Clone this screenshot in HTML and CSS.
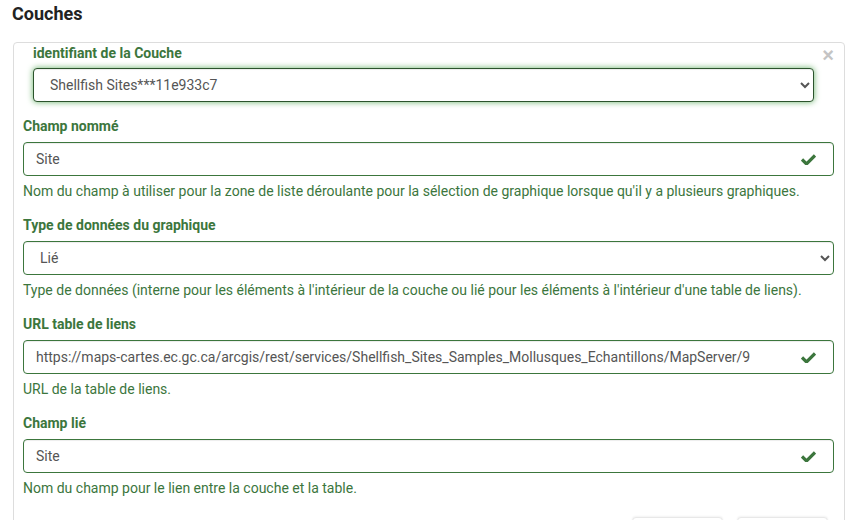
FILE: index.html
```html
<!DOCTYPE html>
<html lang="fr">
<head>
<meta charset="utf-8">
<link rel="stylesheet" href="styles.css">
</head>
<body>
<h2 class="title">Couches</h2>
<div class="panel">
  <button class="close" type="button">×</button>
  <div class="group first">
    <label class="lbl">identifiant de la Couche</label>
    <select class="ctrl sel focus">
      <option>Shellfish Sites***11e933c7</option>
    </select>
  </div>
  <div class="group">
    <label class="lbl">Champ nommé</label>
    <div class="field">
      <input class="ctrl" type="text" value="Site">
      <svg class="ok" width="15" height="12" viewBox="0 0 15 12"><path d="M1 6.5 L5.5 11 L14 2.5" fill="none" stroke="#3c763d" stroke-width="3.2"/></svg>
    </div>
    <p class="help">Nom du champ à utiliser pour la zone de liste déroulante pour la sélection de graphique lorsque qu'il y a plusieurs graphiques.</p>
  </div>
  <div class="group">
    <label class="lbl">Type de données du graphique</label>
    <select class="ctrl sel">
      <option>Lié</option>
    </select>
    <p class="help">Type de données (interne pour les éléments à l'intérieur de la couche ou lié pour les éléments à l'intérieur d'une table de liens).</p>
  </div>
  <div class="group">
    <label class="lbl">URL table de liens</label>
    <div class="field">
      <input class="ctrl" type="text" value="https://maps-cartes.ec.gc.ca/arcgis/rest/services/Shellfish_Sites_Samples_Mollusques_Echantillons/MapServer/9">
      <svg class="ok" width="15" height="12" viewBox="0 0 15 12"><path d="M1 6.5 L5.5 11 L14 2.5" fill="none" stroke="#3c763d" stroke-width="3.2"/></svg>
    </div>
    <p class="help">URL de la table de liens.</p>
  </div>
  <div class="group">
    <label class="lbl">Champ lié</label>
    <div class="field">
      <input class="ctrl" type="text" value="Site">
      <svg class="ok" width="15" height="12" viewBox="0 0 15 12"><path d="M1 6.5 L5.5 11 L14 2.5" fill="none" stroke="#3c763d" stroke-width="3.2"/></svg>
    </div>
    <p class="help">Nom du champ pour le lien entre la couche et la table.</p>
  </div>
  <div class="actions">
    <button class="btn" type="button" aria-label="Monter"></button>
    <button class="btn" type="button" aria-label="Descendre"></button>
  </div>
</div>
</body>
</html>
```
FILE: styles.css
```css
html, body {
  margin: 0;
  overflow: hidden;
  background: #fff;
}
body {
  padding: 3px 14px 0 13px;
  font-family: Roboto, "Liberation Sans", sans-serif;
  font-size: 14px;
  line-height: 20px;
  color: #333;
}
.title {
  margin: 0 0 17px -1px;
  font-size: 18px;
  line-height: 22px;
  font-weight: 700;
  color: #222;
}
.panel {
  position: relative;
  width: 811px;
  border: 1px solid #ddd;
  border-radius: 4px;
  padding: 0 10px 0 9px;
}
.close {
  position: absolute;
  top: 2px;
  right: 10px;
  border: 0;
  background: none;
  padding: 0;
  font-family: "Liberation Sans", sans-serif;
  font-size: 20px;
  line-height: 20px;
  font-weight: 700;
  color: #c4c4c4;
}
.group {
  display: flex;
  flex-direction: column;
  margin-bottom: 14px;
}
.group.first {
  margin: 0 20px 14px 10px;
}
.lbl {
  font-weight: 700;
  color: #3c763d;
  margin-bottom: 6px;
}
.first .lbl {
  margin-bottom: 5px;
}
.field {
  position: relative;
}
.ctrl {
  box-sizing: border-box;
  width: 100%;
  height: 34px;
  margin: 0;
  padding: 6px 12px;
  border: 1px solid #3c763d;
  border-radius: 4px;
  font-family: Roboto, "Liberation Sans", sans-serif;
  font-size: 14px;
  color: #555;
  background: #fff;
  box-shadow: inset 0 1px 1px rgba(0,0,0,.075);
  outline: none;
}
.sel {
  padding-left: 12px;
}
.focus {
  border-color: #2b542c;
  box-shadow: inset 0 1px 1px rgba(0,0,0,.075), 0 0 6px #67b168;
}
.ok {
  position: absolute;
  right: 18px;
  top: 11px;
}
.help {
  margin: 5px 0 0;
  color: #3c763d;
}
.actions {
  display: flex;
  justify-content: flex-end;
  gap: 14px;
  padding: 5px 6px 0 0;
}
.btn {
  width: 91px;
  height: 34px;
  border: 1px solid #e8e8e8;
  border-radius: 4px;
  background: #fff;
  box-shadow: 0 -1px 2px rgba(0,0,0,.05);
}
```
